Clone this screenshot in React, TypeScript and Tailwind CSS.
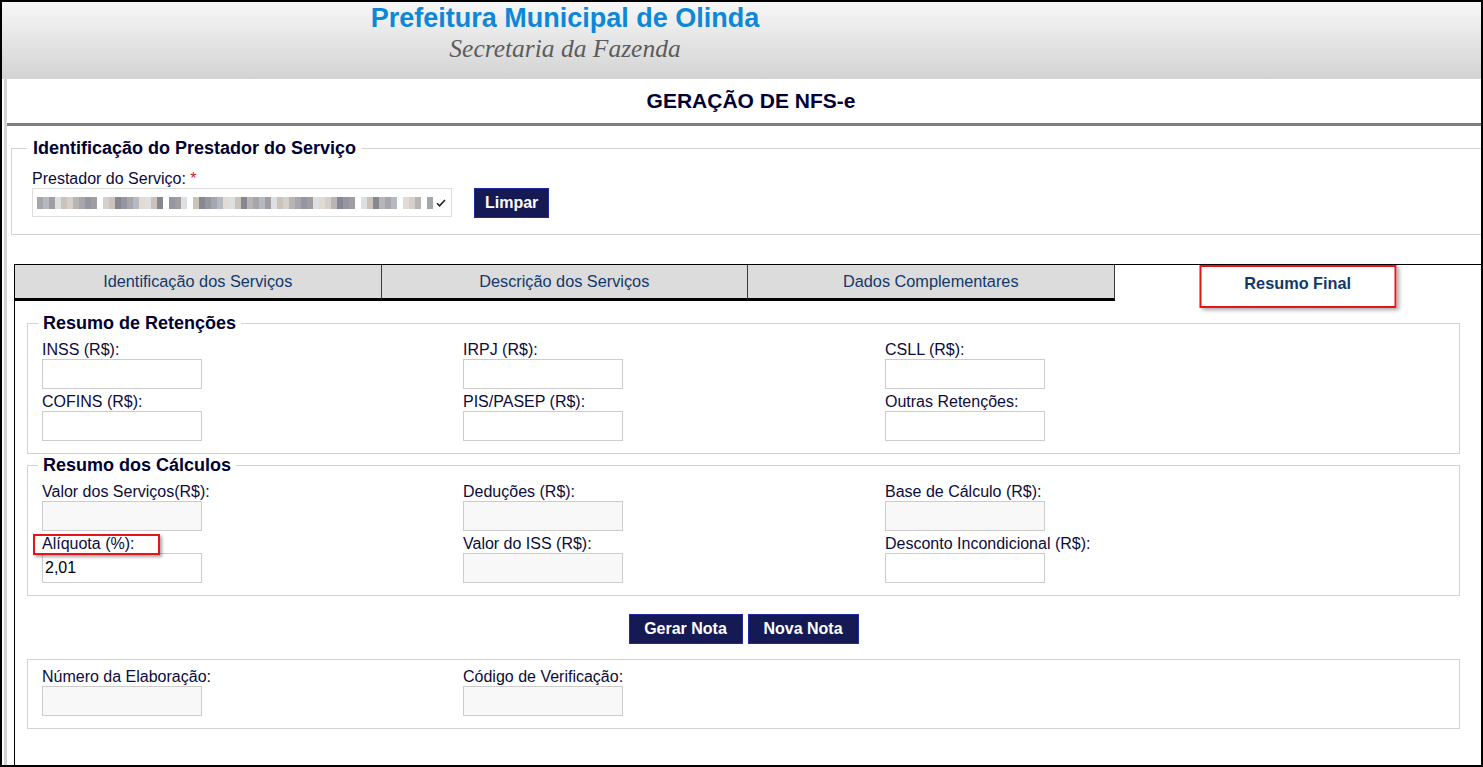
import React from 'react';

const labelCls = 'h-[19px] leading-[19px] text-[16px] text-[#0c0c3c] whitespace-nowrap';

interface FieldProps {
  label: string;
  value?: string;
  disabled?: boolean;
  highlight?: boolean;
}

function Field({ label, value = '', disabled = false, highlight = false }: FieldProps) {
  return (
    <div className="flex flex-col">
      <div className={`relative ${labelCls}`}>
        {label}
        {highlight && (
          <span className="absolute left-[-9px] top-0 w-[127px] h-[21px] border-2 border-[#e8141b] shadow-[2px_2px_3px_rgba(0,0,0,0.35)]" />
        )}
      </div>
      <input
        readOnly
        disabled={disabled}
        defaultValue={value}
        className={`w-[160px] h-[30px] border border-[#cccccc] px-[2px] text-[16px] text-black outline-none ${
          disabled ? 'bg-[#f8f8f8]' : 'bg-white'
        }`}
      />
    </div>
  );
}

function Legend({ children }: { children: React.ReactNode }) {
  return <legend className="ml-[10px] px-[5px] text-[18px] leading-[20px] font-bold text-[#000033]">{children}</legend>;
}

// pixelated (censored) provider name
const blurColors = ['#b9b5b6', '#a19da0', '#d6d0ca', '#9497a2', '#e2dbd4', '#878792', '#b4b9c2', '#cbc2b9', '#a8a6ad', '#dedfe3'];
const blurWords = [10, 10, 3, 27, 6, 3, 1];

function BlurredName() {
  let n = 0;
  return (
    <div className="flex items-center gap-[6px]">
      {blurWords.map((len, w) => (
        <div key={w} className="flex">
          {[...Array(len)].map((_, i) => {
            n++;
            return (
              <span
                key={i}
                className="block w-[6px] h-[12px]"
                style={{ backgroundColor: blurColors[(n * 7 + w * 3 + (n % 3)) % blurColors.length] }}
              />
            );
          })}
        </div>
      ))}
    </div>
  );
}

const tabs = ['Identificação dos Serviços', 'Descrição dos Serviços', 'Dados Complementares'];

export default function App() {
  return (
    <div className="w-[1483px] h-[767px] border-2 border-black flex flex-col overflow-hidden bg-white font-['Liberation_Sans',Arial,sans-serif]">
      {/* cabeçalho */}
      <div className="h-[77px] shrink-0 bg-gradient-to-b from-[#f7f7f7] to-[#d3d3d3]">
        <div className="w-[1126px] flex flex-col items-center pt-[1px]">
          <div className="text-[27px] leading-[30px] font-bold text-[#0d87d7]">Prefeitura Municipal de Olinda</div>
          <div className="mt-[2px] text-[25.5px] leading-[28px] italic text-[#5c5c5c] font-['Liberation_Serif','Times_New_Roman',serif]">
            Secretaria da Fazenda
          </div>
        </div>
      </div>

      <div className="flex-1 flex flex-col ml-[2px] border-l-[3px] border-[#d4d4d4]">
        <div className="h-[44px] shrink-0 flex items-center justify-center pl-[14px] text-[21px] font-bold text-[#000033]">
          GERAÇÃO DE NFS-e
        </div>
        <div className="h-[3px] shrink-0 bg-[#808080]" />

        {/* prestador */}
        <fieldset className="mt-[12px] ml-[4px] border border-r-0 border-[#d3d3d3] pt-[10px] pb-[16px]">
          <legend className="ml-[15px] px-[6px] text-[18px] leading-[21px] font-bold text-[#000033]">
            Identificação do Prestador do Serviço
          </legend>
          <div className="pl-[20px]">
            <div className={labelCls}>
              Prestador do Serviço: <span className="text-[#c0262d]">*</span>
            </div>
            <div className="flex items-start">
              <div className="w-[420px] h-[29px] border border-[#dddddd] bg-white flex items-center justify-between pl-[4px] pr-[5px]">
                <BlurredName />
                <svg width="10" height="8" viewBox="0 0 10 8" className="shrink-0">
                  <path d="M1 4.2 L3.6 6.8 L9 1" fill="none" stroke="#222" strokeWidth="1.6" />
                </svg>
              </div>
              <button className="ml-[22px] h-[30px] px-[10px] bg-[#151a55] border border-[#1f2aa0] text-white font-bold text-[16px]">
                Limpar
              </button>
            </div>
          </div>
        </fieldset>

        {/* abas */}
        <div className="flex-1 mt-[29px] ml-[7px] border-l border-t border-black flex flex-col">
          <div className="grid grid-cols-4 h-[36px] shrink-0">
            {tabs.map((t) => (
              <div
                key={t}
                className="bg-[#dcdcdc] border-r border-[#3a3a3a] border-b-[3px] border-b-black flex items-center justify-center text-[16.3px] text-[#12386a]"
              >
                {t}
              </div>
            ))}
            <div className="relative flex items-start justify-center pt-[6px] text-[16.3px] font-bold text-[#12386a]">
              Resumo Final
              <span className="absolute left-1/2 -translate-x-1/2 top-0 w-[197px] h-[43px] border-2 border-[#e8141b] shadow-[2px_2px_4px_rgba(0,0,0,0.35)]" />
            </div>
          </div>

          <div className="ml-[12px] mr-[21px] flex flex-col">
            <fieldset className="mt-[12px] border border-[#d3d3d3] pt-[7px] pb-[12px]">
              <Legend>Resumo de Retenções</Legend>
              <div className="pl-[14px] grid grid-cols-[421px_422px_1fr] gap-y-[3px]">
                <Field label="INSS (R$):" />
                <Field label="IRPJ (R$):" />
                <Field label="CSLL (R$):" />
                <Field label="COFINS (R$):" />
                <Field label="PIS/PASEP (R$):" />
                <Field label="Outras Retenções:" />
              </div>
            </fieldset>

            <fieldset className="mt-[1px] border border-[#d3d3d3] pt-[7px] pb-[12px]">
              <Legend>Resumo dos Cálculos</Legend>
              <div className="pl-[14px] grid grid-cols-[421px_422px_1fr] gap-y-[3px]">
                <Field label="Valor dos Serviços(R$):" disabled />
                <Field label="Deduções (R$):" disabled />
                <Field label="Base de Cálculo (R$):" disabled />
                <Field label="Alíquota (%):" value="2,01" highlight />
                <Field label="Valor do ISS (R$):" disabled />
                <Field label="Desconto Incondicional (R$):" />
              </div>
            </fieldset>

            <div className="mt-[18px] flex justify-center gap-[5px]">
              <button className="w-[114px] h-[30px] bg-[#151a55] border border-[#1f2aa0] text-white font-bold text-[16px]">
                Gerar Nota
              </button>
              <button className="w-[111px] h-[30px] bg-[#151a55] border border-[#1f2aa0] text-white font-bold text-[16px]">
                Nova Nota
              </button>
            </div>

            <fieldset className="mt-[15px] border border-[#d3d3d3] pt-[7px] pb-[12px]">
              <div className="pl-[14px] grid grid-cols-[421px_422px_1fr]">
                <Field label="Número da Elaboração:" disabled />
                <Field label="Código de Verificação:" disabled />
              </div>
            </fieldset>
          </div>
        </div>
      </div>
    </div>
  );
}
